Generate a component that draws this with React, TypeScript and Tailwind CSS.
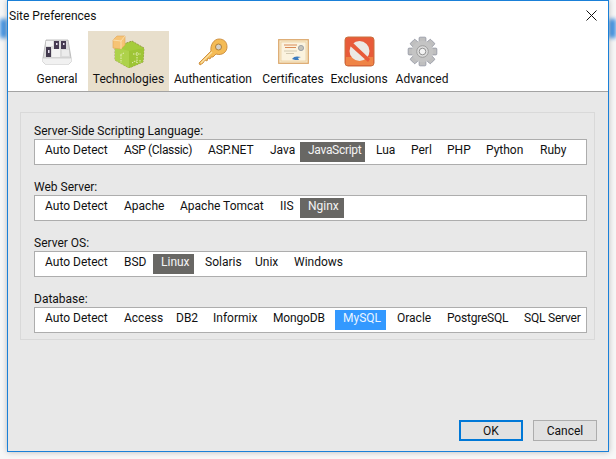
const FONT = "font-['Roboto','Noto_Sans',sans-serif]";

function GeneralIcon() {
  return (
    <svg width="32" height="26" viewBox="0 0 32 26">
      <path d="M5 1h22l3 18v4l-2 2H4l-2-2v-4z" fill="#dcdcdc" stroke="#b0b0b0" strokeWidth="0.8" />
      <path d="M2 19h28v4l-2 2H4l-2-2z" fill="#f1f1f1" />
      <path d="M2 19h28" stroke="#bcbcbc" strokeWidth="0.6" />
      <rect x="5" y="2" width="7" height="5" fill="#f4f4f4" />
      <rect x="13" y="2" width="5" height="8" fill="#463b52" />
      <rect x="20" y="2" width="5" height="8" fill="#463b52" />
      <rect x="5" y="8" width="5" height="10" fill="#433a4e" />
      <rect x="11" y="10" width="8" height="8" fill="#f3f3f3" />
      <rect x="21" y="11" width="7" height="6" fill="#ececec" />
      <rect x="15" y="4" width="1.5" height="2" fill="#e8e0f0" />
      <rect x="22" y="4" width="1.5" height="2" fill="#e8e0f0" />
      <rect x="7" y="11" width="1.5" height="3" fill="#e8e0f0" />
    </svg>
  );
}

function TechIcon() {
  return (
    <svg width="33" height="33" viewBox="0 0 33 33">
      <path d="M3 12l17-6 12 7-1 14-14 6-14-8z" fill="#a5cc3c" stroke="#8d8f3a" strokeWidth="0.8" strokeDasharray="2 1" />
      <path d="M17 16l15-3-1 14-14 6z" fill="#9ec536" />
      <path d="M3 12l14 4v17l-14-8z" fill="#aed24b" />
      <path d="M25 17v11M21 19h8M20 28l3-2 3 2M28 25v3" stroke="#e6efb8" strokeWidth="1" fill="none" strokeDasharray="1.5 1" />
      <path d="M9 20v8M12 18l-4 2" stroke="#e6efb8" strokeWidth="1" fill="none" strokeDasharray="1.5 1" />
      <path d="M1 5l4-4h8l0 9-4 4-8-1z" fill="#f6c375" stroke="#e3a656" strokeWidth="0.6" />
      <path d="M1 5l8 1 4-5M9 6v8" stroke="#fbe3b8" strokeWidth="0.8" fill="none" />
    </svg>
  );
}

function KeyIcon() {
  return (
    <svg width="30" height="29" viewBox="0 0 30 29">
      <path d="M2 28l-1-2 12-12c-1-6 3-12 8-12 5 0 8 3 8 8 0 5-5 9-11 7l-3 3-2 0-1 2-2-1-1 3-2-1-2 3-3 2z" fill="#f4bb55" stroke="#c98a3a" strokeWidth="0.9" />
      <circle cx="20.5" cy="10" r="3" fill="#d3d0c8" stroke="#b07f38" strokeWidth="1" />
      <path d="M3 26l11-11" stroke="#fbe0a4" strokeWidth="1.2" />
    </svg>
  );
}

function CertIcon() {
  return (
    <svg width="31" height="25" viewBox="0 0 31 25">
      <rect x="0.7" y="0.7" width="29.6" height="23.6" fill="#f7e9c9" stroke="#dba66a" strokeWidth="1.2" />
      <rect x="3" y="3" width="25" height="19" fill="#fbf3df" stroke="#e7c590" strokeWidth="0.6" />
      <path d="M6 6h13M7 8.5h11" stroke="#d98a57" strokeWidth="1" />
      <path d="M6 12h13M8 14.5h8" stroke="#c9bfa4" strokeWidth="0.8" />
      <circle cx="23" cy="9" r="2.6" fill="#c4c2b7" stroke="#8f95a0" strokeWidth="0.8" />
      <path d="M14 20c2-3 5-3 9-2l-3 1 1 2c-3 0-5 0-7-1z" fill="#3c7cc0" />
    </svg>
  );
}

function ExclusionIcon() {
  return (
    <svg width="31" height="31" viewBox="0 0 31 31">
      <rect x="1" y="1" width="29" height="29" rx="3" fill="#e85b3a" stroke="#c9723e" />
      <path d="M2 21h27v8H2z" fill="#ef8446" />
      <circle cx="15.5" cy="15" r="10" fill="#ece9e4" />
      <path d="M7 5L26 23l-2 3L4 8z" fill="#e85b3a" />
    </svg>
  );
}

function GearIcon() {
  const teeth = [0, 45, 90, 135, 180, 225, 270, 315];
  return (
    <svg width="31" height="31" viewBox="0 0 32 32">
      {teeth.map((a) => (
        <rect key={a} x="12.5" y="1.2" width="7" height="7" rx="1" fill="#bfbfbf" stroke="#8f92a0" strokeWidth="0.8" transform={`rotate(${a} 16 16)`} />
      ))}
      <circle cx="16" cy="16" r="11" fill="#c4c4c4" />
      <circle cx="16" cy="16" r="6" fill="#dcdcdc" stroke="#9a9a9a" />
      <circle cx="16" cy="16" r="3.4" fill="#f3f3f3" stroke="#8e8e8e" />
    </svg>
  );
}

type Tab = { label: string; w: string; selected?: boolean; icon: React.ReactNode; offset: string };

const tabs: Tab[] = [
  { label: "General", w: "w-[59px]", icon: <GeneralIcon />, offset: "pr-[3px]" },
  { label: "Technologies", w: "w-[81px]", selected: true, icon: <TechIcon />, offset: "" },
  { label: "Authentication", w: "w-[88px]", icon: <KeyIcon />, offset: "" },
  { label: "Certificates", w: "w-[72px]", icon: <CertIcon />, offset: "" },
  { label: "Exclusions", w: "w-[60px]", icon: <ExclusionIcon />, offset: "" },
  { label: "Advanced", w: "w-[66px]", icon: <GearIcon />, offset: "" },
];

type Item = [string, string];
type Group = { label: string; items: Item[]; selected: string; selClass: string };

const AUTO: Item = ["Auto Detect", "w-[76px]"];

const groups: Group[] = [
  {
    label: "Server-Side Scripting Language:",
    items: [
      AUTO,
      ["ASP (Classic)", "w-[81px] tracking-[-0.35px]"],
      ["ASP.NET", "w-[59px] tracking-[-0.15px]"],
      ["Java", "w-[35px]"],
      ["JavaScript", "w-[65px] tracking-[-0.3px]"],
      ["Lua", "w-[32px]"],
      ["Perl", "w-[33px]"],
      ["PHP", "w-[36px]"],
      ["Python", "w-[51px]"],
      ["Ruby", "w-[40px]"],
    ],
    selected: "JavaScript",
    selClass: "bg-[#686764] text-[#f4f4f4]",
  },
  {
    label: "Web Server:",
    items: [
      AUTO,
      ["Apache", "w-[53px]"],
      ["Apache Tomcat", "w-[97px]"],
      ["IIS", "w-[25px]"],
      ["Nginx", "w-[44px]"],
    ],
    selected: "Nginx",
    selClass: "bg-[#686764] text-[#f4f4f4]",
  },
  {
    label: "Server OS:",
    items: [
      AUTO,
      ["BSD", "w-[34px]"],
      ["Linux", "w-[41px]"],
      ["Solaris", "w-[47px]"],
      ["Unix", "w-[36px]"],
      ["Windows", "w-[62px]"],
    ],
    selected: "Linux",
    selClass: "bg-[#686764] text-[#f4f4f4]",
  },
  {
    label: "Database:",
    items: [
      AUTO,
      ["Access", "w-[49px]"],
      ["DB2", "w-[34px]"],
      ["Informix", "w-[57px]"],
      ["MongoDB", "w-[67px] tracking-[-0.15px]"],
      ["MySQL", "w-[51px]"],
      ["Oracle", "w-[47px]"],
      ["PostgreSQL", "w-[74px] tracking-[-0.2px]"],
      ["SQL Server", "w-[69px] tracking-[-0.2px]"],
    ],
    selected: "MySQL",
    selClass: "bg-[#3399ff] text-[#eaf4ff]",
  },
];

export default function App() {
  return (
    <div className={`relative w-[616px] h-[459px] overflow-hidden bg-[#f7f7f7] pl-[7px] text-[12px] text-[#111] ${FONT}`}>
      <div className="absolute left-0 top-[19px] w-[7px] h-[19px] bg-[#3d8fe0] blur-[2px]" />
      <div className="absolute right-0 top-[19px] w-[7px] h-[19px] bg-[#3d8fe0] blur-[2px]" />
      <div className="relative flex flex-col w-[602px] h-[452px] border border-[#1a80d8] bg-[#e8e8e8] shadow-[0_0_6px_rgba(0,0,0,0.25)]">
        <div className="bg-white border-b border-[#a3a3a3] h-[91px] flex flex-col">
          <div className="flex items-center justify-between h-[30px] pl-[1px] pr-[11px]">
            <span className="leading-none">Site Preferences</span>
            <svg width="11" height="11" viewBox="0 0 11 11" className="mt-[-1px]">
              <path d="M.5.5l10 10M10.5.5l-10 10" stroke="#111" strokeWidth="1" />
            </svg>
          </div>
          <div className="flex pl-[21px] flex-1">
            {tabs.map((t) => (
              <div key={t.label} className={`${t.w} ${t.offset} flex flex-col items-center ${t.selected ? "bg-[#e8dfcc]" : ""}`}>
                <div className="h-[41px] flex items-center justify-center">{t.icon}</div>
                <span className="whitespace-nowrap leading-[14px]">{t.label}</span>
              </div>
            ))}
          </div>
        </div>
        <div className="flex-1 flex flex-col pl-[12px] pr-[11px] pt-[20px]">
          <div className="w-[575px] h-[228px] border border-[#d9d9d9] pl-[13px] pr-[7px] pt-[10px] flex flex-col gap-[14px]">
            {groups.map((g) => (
              <div key={g.label} className="flex flex-col">
                <div className="leading-[16px] h-[16px]">{g.label}</div>
                <div className="h-[26px] border border-[#adadad] bg-white px-[2px] flex items-center gap-[3px]">
                  {g.items.map(([it, w]) => (
                    <span key={it} className={`${w} shrink-0 h-[20px] leading-[17px] pl-[8px] whitespace-nowrap ${it === g.selected ? g.selClass : ""}`}>
                      {it}
                    </span>
                  ))}
                </div>
              </div>
            ))}
          </div>
          <div className="mt-auto mb-[10px] flex justify-end gap-[10px]">
            <button className="w-[64px] h-[21px] border-2 border-[#0078d7] bg-[#e1e1e1] leading-none">OK</button>
            <button className="w-[64px] h-[21px] border border-[#adadad] bg-[#e1e1e1] leading-none">Cancel</button>
          </div>
        </div>
      </div>
    </div>
  );
}
